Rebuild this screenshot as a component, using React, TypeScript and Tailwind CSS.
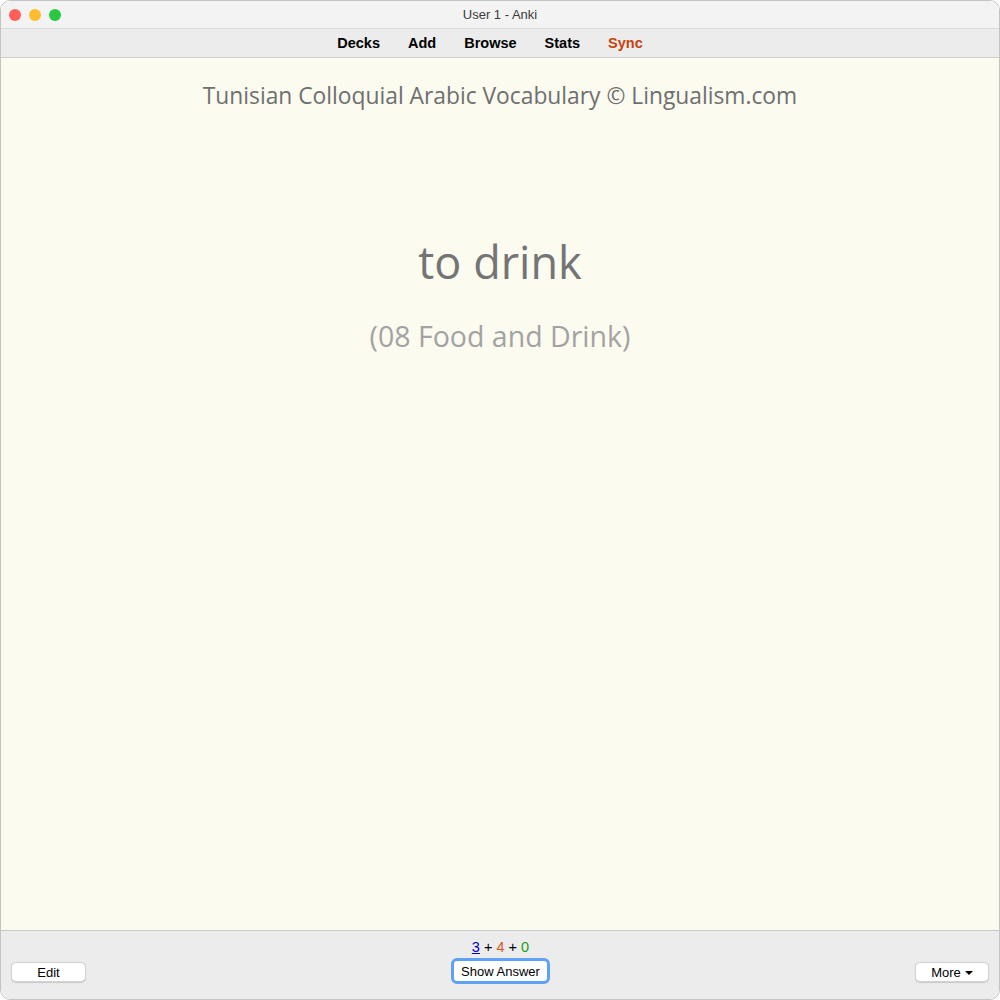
import React from 'react';

const navItems = [
  { label: 'Decks', className: 'text-black' },
  { label: 'Add', className: 'text-black' },
  { label: 'Browse', className: 'text-black' },
  { label: 'Stats', className: 'text-black' },
  { label: 'Sync', className: 'text-[#c8410a]' },
];

export default function App() {
  return (
    <div className="h-[1000px] w-[1000px] bg-white font-['Liberation_Sans',Arial,sans-serif]">
      <div className="flex h-full flex-col overflow-hidden rounded-[10px] border border-[#c4c4c4]">
        {/* title bar */}
        <div className="relative flex h-[28px] shrink-0 items-center justify-center border-b border-[#dadada] bg-[#f3f3f3]">
          <div className="absolute left-[8px] top-[8px] flex gap-[8px]">
            <span className="h-[12px] w-[12px] rounded-full bg-[#fe5f57]" />
            <span className="h-[12px] w-[12px] rounded-full bg-[#febc2e]" />
            <span className="h-[12px] w-[12px] rounded-full bg-[#28c840]" />
          </div>
          <span className="text-[13px] text-[#3c3c3c]">User 1 - Anki</span>
        </div>

        {/* toolbar */}
        <div className="flex h-[29px] shrink-0 items-center justify-center gap-[28px] border-b border-[#cfcfcf] bg-[#ececec] pr-[20px] pt-[2px]">
          {navItems.map((item) => (
            <span key={item.label} className={`text-[14.5px] font-bold ${item.className}`}>
              {item.label}
            </span>
          ))}
        </div>

        {/* card */}
        <div className="flex flex-1 flex-col items-center bg-[#fbfbef] font-['Open_Sans',sans-serif] text-[#6f6f6f]">
          <p className="mt-[22px] text-[22.8px] leading-[32px]">
            Tunisian Colloquial Arabic Vocabulary © Lingualism.com
          </p>
          <p className="mt-[127px] text-[45px] leading-none text-[#747474]">to drink</p>
          <p className="mt-[38px] text-[28.5px] leading-none text-[#a3a3a3]">(08 Food and Drink)</p>
        </div>

        {/* bottom bar */}
        <div className="flex h-[69px] shrink-0 items-end justify-between border-t border-[#c8c8c8] bg-[#ececec] px-[10px]">
          <button className="mb-[17px] h-[20px] w-[75px] rounded-[5px] border border-[#d2d2d2] bg-white text-[13px] leading-none text-black shadow-[0_0.5px_1px_rgba(0,0,0,0.15)]">
            Edit
          </button>
          <div className="mb-[15px] flex flex-col items-center">
            <div className="mb-[4px] text-[14.5px] leading-none">
              <span className="text-[#0000c0] underline">3</span>
              <span className="text-black"> + </span>
              <span className="text-[#d9561b]">4</span>
              <span className="text-black"> + </span>
              <span className="text-[#12a012]">0</span>
            </div>
            <button className="h-[26px] w-[99px] rounded-[6px] border-[3px] border-[#5ea2f5] bg-white text-[13px] leading-none text-black">
              Show Answer
            </button>
          </div>
          <button className="mb-[17px] flex h-[20px] w-[74px] items-center justify-center gap-[4px] rounded-[5px] border border-[#d2d2d2] bg-white text-[13px] leading-none text-black shadow-[0_0.5px_1px_rgba(0,0,0,0.15)]">
            More
            <span className="mt-[2px] h-0 w-0 border-x-[4px] border-t-[4px] border-x-transparent border-t-black" />
          </button>
        </div>
      </div>
    </div>
  );
}
